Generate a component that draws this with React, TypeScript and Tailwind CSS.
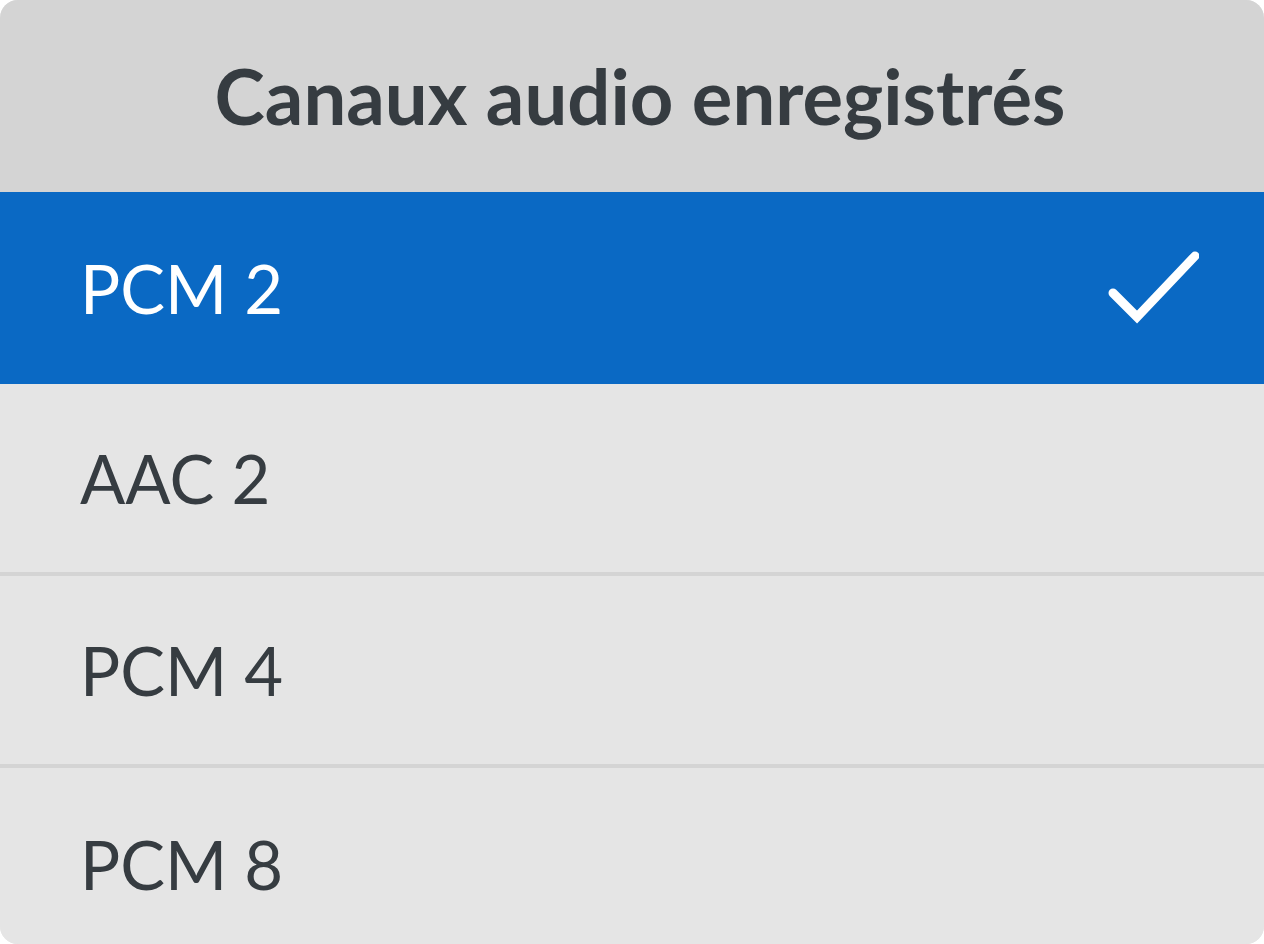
import React from 'react';

const OPTIONS = ['PCM 2', 'AAC 2', 'PCM 4', 'PCM 8'];

const CheckIcon = () => (
  <svg width="100" height="80" viewBox="0 0 100 80" fill="none" className="shrink-0">
    <path
      d="M14 45 L38 69 L96 8"
      stroke="white"
      strokeWidth={9}
      strokeLinecap="round"
      strokeLinejoin="miter"
    />
  </svg>
);

const App: React.FC = () => {
  const selected = 'PCM 2';

  return (
    <div className="w-[1264px] h-[944px] overflow-hidden rounded-[18px] bg-[#e5e5e5] font-['Lato',sans-serif] text-[#363c41]">
      <div className="h-[192px] bg-[#d4d4d4] flex items-center justify-center pl-[16px]">
        <h1 className="text-[76px] font-bold leading-none">Canaux audio enregistrés</h1>
      </div>
      <div className="flex flex-col">
        {OPTIONS.map((opt, i) => {
          const isSelected = opt === selected;
          return (
            <div
              key={opt}
              className={`h-[192px] shrink-0 flex items-center justify-between pl-[80px] pr-[65px] ${
                isSelected ? 'bg-[#0a69c4] text-white' : 'bg-[#e5e5e5]'
              } ${i > 0 && i < OPTIONS.length - 1 ? 'border-b-4 border-[#d4d4d4]' : ''}`}
            >
              <span className="text-[67px] leading-none">{opt}</span>
              {isSelected && <CheckIcon />}
            </div>
          );
        })}
      </div>
    </div>
  );
};

export default App;
